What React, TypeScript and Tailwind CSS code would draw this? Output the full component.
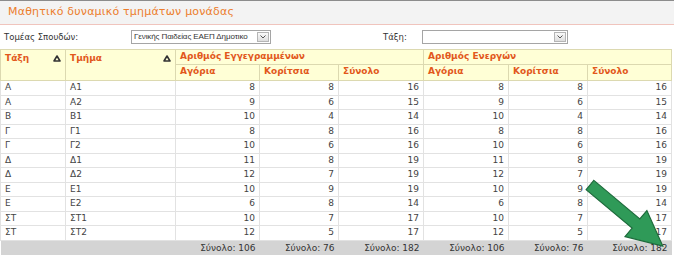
import React from 'react';

const rows: [string, string, number, number, number, number, number, number][] = [
  ['Α', 'Α1', 8, 8, 16, 8, 8, 16],
  ['Α', 'Α2', 9, 6, 15, 9, 6, 15],
  ['Β', 'Β1', 10, 4, 14, 10, 4, 14],
  ['Γ', 'Γ1', 8, 8, 16, 8, 8, 16],
  ['Γ', 'Γ2', 10, 6, 16, 10, 6, 16],
  ['Δ', 'Δ1', 11, 8, 19, 11, 8, 19],
  ['Δ', 'Δ2', 12, 7, 19, 12, 7, 19],
  ['Ε', 'Ε1', 10, 9, 19, 10, 9, 19],
  ['Ε', 'Ε2', 6, 8, 14, 6, 8, 14],
  ['ΣΤ', 'ΣΤ1', 10, 7, 17, 10, 7, 17],
  ['ΣΤ', 'ΣΤ2', 12, 5, 17, 12, 5, 17],
];

const totals = [106, 76, 182, 106, 76, 182];

const SortIcon = () => (
  <svg width="8" height="7" viewBox="0 0 8 7" className="shrink-0">
    <path d="M4 1 L7 6 L1 6 Z" fill="none" stroke="#333" strokeWidth="1.6" strokeLinejoin="round" />
  </svg>
);

const Select = ({ value, width }: { value: string; width: string }) => (
  <div className={`flex h-[14px] items-stretch border border-[#a5a5a5] bg-white ${width}`}>
    <div className="flex-1 overflow-hidden whitespace-nowrap pl-[2px] font-['Liberation_Sans',sans-serif] text-[8px] leading-[12px] tracking-[-0.1px] text-[#333]">
      {value}
    </div>
    <div className="my-[1px] mr-[1px] flex w-[12px] items-center justify-center border border-[#b5b5b5] bg-gradient-to-b from-[#fafafa] to-[#dedede]">
      <svg width="6" height="4" viewBox="0 0 6 4">
        <path d="M0.5 0.5 L3 3 L5.5 0.5" fill="none" stroke="#555" strokeWidth="1" />
      </svg>
    </div>
  </div>
);

const th = 'border border-[#dcd9b0] px-[4px] text-left align-top font-bold text-[9px] text-[#e2581c]';
const td = 'border border-[#e2e2e2] px-[4px] text-[9px] text-[#444]';

export default function App() {
  return (
    <div className="relative h-[255px] w-[674px] overflow-hidden bg-white font-['DejaVu_Sans',sans-serif]">
      <div className="h-[1px] bg-[#8c8c8c]" />
      <div className="flex h-[24px] items-center border-b border-[#f0c4bd] bg-[#f3f3f3] px-[8px] text-[11px] tracking-[0.2px] text-[#ec7d2c]">
        Μαθητικό δυναμικό τμημάτων μονάδας
      </div>
      <div className="flex h-[24px] items-center text-[8.5px] text-[#333]">
        <div className="w-[131px] pl-[4px]">Τομέας Σπουδών:</div>
        <Select value="Γενικής Παιδείας ΕΑΕΠ Δημοτικο" width="w-[140px]" />
        <div className="ml-[112px] w-[39px]">Τάξη:</div>
        <Select value="" width="w-[146px]" />
      </div>
      <table className="w-[671px] table-fixed border-collapse">
        <colgroup>
          <col className="w-[65px]" />
          <col className="w-[110px]" />
          <col className="w-[84px]" />
          <col className="w-[79px]" />
          <col className="w-[85px]" />
          <col className="w-[85px]" />
          <col className="w-[79px]" />
          <col className="w-[84px]" />
        </colgroup>
        <thead className="bg-[#ffffd6]">
          <tr className="h-[15px]">
            <th rowSpan={2} className={th}>
              <div className="flex items-center justify-between pt-[2px]">
                <span>Τάξη</span>
                <SortIcon />
              </div>
            </th>
            <th rowSpan={2} className={th}>
              <div className="flex items-center justify-between pt-[2px]">
                <span>Τμήμα</span>
                <SortIcon />
              </div>
            </th>
            <th colSpan={3} className={`${th} align-middle`}>Αριθμός Εγγεγραμμένων</th>
            <th colSpan={3} className={`${th} align-middle`}>Αριθμός Ενεργών</th>
          </tr>
          <tr className="h-[16px]">
            <th className={`${th} align-middle`}>Αγόρια</th>
            <th className={`${th} align-middle`}>Κορίτσια</th>
            <th className={`${th} align-middle`}>Σύνολο</th>
            <th className={`${th} align-middle`}>Αγόρια</th>
            <th className={`${th} align-middle`}>Κορίτσια</th>
            <th className={`${th} align-middle`}>Σύνολο</th>
          </tr>
        </thead>
        <tbody>
          {rows.map((r, i) => (
            <tr key={i} className="h-[14.4px]">
              <td className={td}>{r[0]}</td>
              <td className={td}>{r[1]}</td>
              {r.slice(2).map((v, j) => (
                <td key={j} className={`${td} text-right`}>{v}</td>
              ))}
            </tr>
          ))}
          <tr className="h-[17px] bg-[#d4d4d4]">
            <td className="px-[4px]" />
            <td className="px-[4px]" />
            {totals.map((t, j) => (
              <td key={j} className="px-[4px] text-right text-[9px] text-[#333]">Σύνολο: {t}</td>
            ))}
          </tr>
        </tbody>
      </table>
      <svg className="pointer-events-none absolute left-0 top-0" width="674" height="255" viewBox="0 0 674 255">
        <g transform="translate(590 185) rotate(40)">
          <path
            d="M0 -6 L60 -6 L60 -17 L95 0 L60 17 L60 6 L0 6 Z"
            fill="#2f9a58"
            stroke="#1d6b3b"
            strokeWidth="1.2"
            strokeLinejoin="miter"
          />
        </g>
      </svg>
    </div>
  );
}
